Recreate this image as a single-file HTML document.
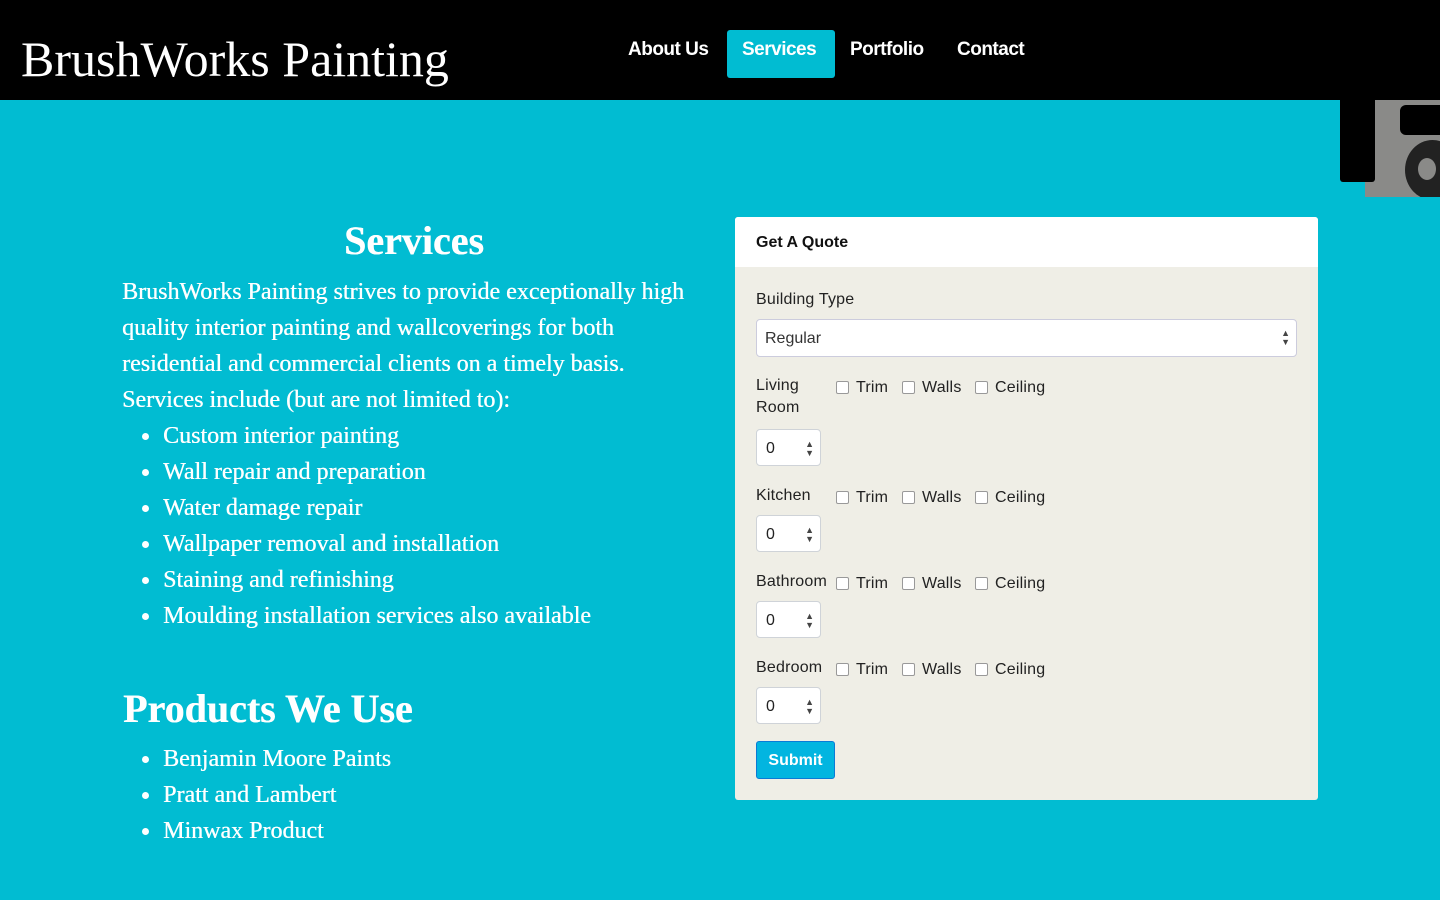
<!DOCTYPE html>
<html><head><meta charset="utf-8">
<style>
*{margin:0;padding:0;box-sizing:border-box}
body{width:1440px;height:900px;background:#01bcd2;position:relative;overflow:hidden;font-family:"Liberation Sans",sans-serif}
.hdr{position:absolute;left:0;top:0;width:1440px;height:100px;background:#000}
.logo{position:absolute;left:21px;top:30px;font-family:"Liberation Serif",serif;font-size:50px;color:#fff;line-height:58px;letter-spacing:0}
.nav a{position:absolute;top:30px;height:48px;line-height:40px;color:#fff;font-weight:bold;font-size:19px;letter-spacing:-0.5px;text-decoration:none;padding:0 15px}
.act{background:#01bcd2;border-radius:3px}
.photo{position:absolute;left:1340px;top:100px;width:100px;height:97px;overflow:hidden}
.serif{font-family:"Liberation Serif",serif;color:#fff;text-shadow:0.4px 0 0 #fff}
h1{position:absolute;left:344px;top:217px;font-size:40px;font-weight:bold;letter-spacing:0}
.p{position:absolute;left:122px;top:274px;width:575px;font-size:24px;line-height:36px}
ul{list-style:none}
ul li{position:relative;padding-left:41px;font-size:24px;line-height:36px}
ul li:before{content:"";position:absolute;left:20px;top:15px;width:7px;height:7px;border-radius:50%;background:#fff}
h2{position:absolute;left:123px;top:685px;font-size:40px;font-weight:bold;letter-spacing:0}
.card{position:absolute;left:735px;top:217px;width:583px;height:583px;background:#efeee6;border-radius:3px;overflow:hidden}
.ch{height:50px;background:#fff;padding:17px 21px;font-weight:bold;font-size:16px;color:#111}
.lbl{position:absolute;font-size:16px;color:#222;line-height:22px;letter-spacing:0.2px}
.sel{position:absolute;left:21px;top:102px;width:541px;height:38px;background:#fff;border:1px solid #ccd;border-radius:4px;font-size:16px;color:#333;padding:10px 8px}
.arr{position:absolute;right:6px;top:9px;font-size:9px;line-height:9px;color:#444}
.num{position:absolute;left:21px;width:65px;height:37px;background:#fff;border:1px solid #cfd3d8;border-radius:4px;font-size:16px;color:#222;padding:10px 9px}
.cb{position:absolute;width:13px;height:13px;border:1px solid #999;border-radius:2px;background:#fff}
.btn{position:absolute;left:21px;top:524px;width:79px;height:38px;background:#02b5e0;border:1px solid #0a7bd6;border-radius:3px;color:#fff;font-weight:bold;font-size:16px;text-align:center;line-height:38px}
</style></head><body>
<div class="hdr">
<div class="logo">BrushWorks Painting</div>
<div class="nav">
<a style="left:613px">About Us</a>
<a class="act" style="left:727px;width:108px">Services</a>
<a style="left:835px">Portfolio</a>
<a style="left:942px">Contact</a>
</div>
</div>
<div class="photo">
<div style="position:absolute;left:25px;top:0;width:75px;height:97px;background:#8a8a88"></div>
<div style="position:absolute;left:0;top:0;width:35px;height:82px;background:#000;border-radius:0 0 3px 3px"></div>
<div style="position:absolute;left:60px;top:5px;width:50px;height:30px;background:#000;border-radius:6px"></div>
<div style="position:absolute;left:65px;top:40px;width:55px;height:60px;background:#222;border-radius:50%"></div>
<div style="position:absolute;left:78px;top:58px;width:18px;height:22px;background:#8a8a88;border-radius:50%"></div>
</div>
<h1 class="serif">Services</h1>
<div class="p serif">BrushWorks Painting strives to provide exceptionally high quality interior painting and wallcoverings for both residential and commercial clients on a timely basis. Services include (but are not limited to):
<ul>
<li>Custom interior painting</li>
<li>Wall repair and preparation</li>
<li>Water damage repair</li>
<li>Wallpaper removal and installation</li>
<li>Staining and refinishing</li>
<li>Moulding installation services also available</li>
</ul></div>
<h2 class="serif">Products We Use</h2>
<ul class="serif" style="position:absolute;left:122px;top:741px">
<li>Benjamin Moore Paints</li>
<li>Pratt and Lambert</li>
<li>Minwax Product</li>
</ul>
<div class="card">
<div class="ch">Get A Quote</div>
<div class="lbl" style="left:21px;top:72px">Building Type</div>
<div class="sel">Regular<div class="arr">▲<br>▼</div></div>

<div class="lbl" style="left:21px;top:158px">Living<br>Room</div>
<div class="cb" style="left:101px;top:164px"></div><div class="lbl" style="left:121px;top:160px">Trim</div>
<div class="cb" style="left:167px;top:164px"></div><div class="lbl" style="left:187px;top:160px">Walls</div>
<div class="cb" style="left:240px;top:164px"></div><div class="lbl" style="left:260px;top:160px">Ceiling</div>
<div class="num" style="top:212px">0<div class="arr" style="top:10px">▲<br>▼</div></div>

<div class="lbl" style="left:21px;top:268px">Kitchen</div>
<div class="cb" style="left:101px;top:274px"></div><div class="lbl" style="left:121px;top:270px">Trim</div>
<div class="cb" style="left:167px;top:274px"></div><div class="lbl" style="left:187px;top:270px">Walls</div>
<div class="cb" style="left:240px;top:274px"></div><div class="lbl" style="left:260px;top:270px">Ceiling</div>
<div class="num" style="top:298px">0<div class="arr" style="top:10px">▲<br>▼</div></div>

<div class="lbl" style="left:21px;top:354px">Bathroom</div>
<div class="cb" style="left:101px;top:360px"></div><div class="lbl" style="left:121px;top:356px">Trim</div>
<div class="cb" style="left:167px;top:360px"></div><div class="lbl" style="left:187px;top:356px">Walls</div>
<div class="cb" style="left:240px;top:360px"></div><div class="lbl" style="left:260px;top:356px">Ceiling</div>
<div class="num" style="top:384px">0<div class="arr" style="top:10px">▲<br>▼</div></div>

<div class="lbl" style="left:21px;top:440px">Bedroom</div>
<div class="cb" style="left:101px;top:446px"></div><div class="lbl" style="left:121px;top:442px">Trim</div>
<div class="cb" style="left:167px;top:446px"></div><div class="lbl" style="left:187px;top:442px">Walls</div>
<div class="cb" style="left:240px;top:446px"></div><div class="lbl" style="left:260px;top:442px">Ceiling</div>
<div class="num" style="top:470px">0<div class="arr" style="top:10px">▲<br>▼</div></div>

<div class="btn">Submit</div>
</div>
</body></html>
